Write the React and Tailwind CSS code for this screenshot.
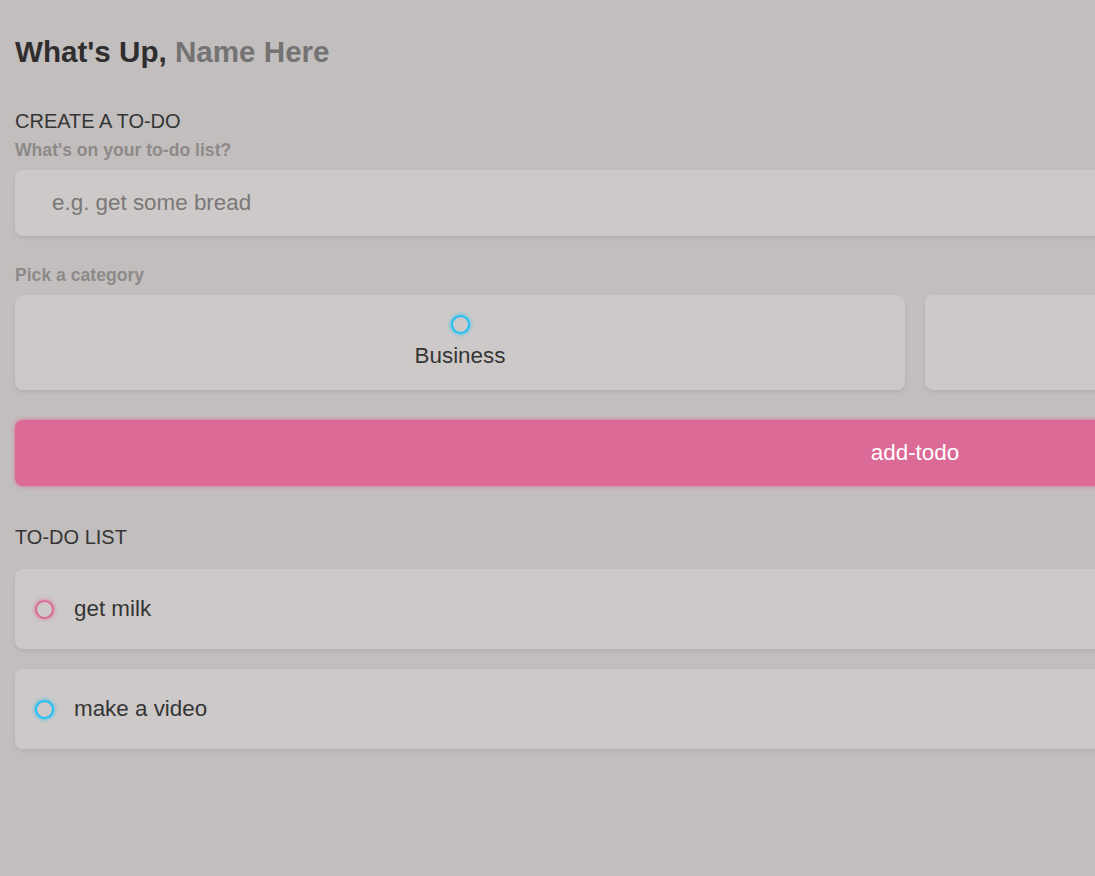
import { useState } from 'react';

const categories = [
    { id: 'business', label: 'Business', ring: 'border-[#1ec0f5] shadow-[0_0_4px_#1ec0f5]' },
    { id: 'personal', label: 'Personal', ring: 'border-[#dc6a96] shadow-[0_0_4px_#dc6a96]' },
];

const todos = [
    { id: 1, text: 'get milk', category: 'personal' },
    { id: 2, text: 'make a video', category: 'business' },
];

const Bubble = ({ category }) => {
    const cat = categories.find((c) => c.id === category) || categories[0];
    return <span className={`block h-[19px] w-[19px] shrink-0 rounded-full border-2 ${cat.ring}`} />;
};

const TodoItem = ({ todo }) => (
    <div className="flex h-[80px] items-center gap-5 rounded-lg bg-[#cdc9c8] px-5 shadow-[0_2px_4px_rgba(0,0,0,0.08)]">
        <Bubble category={todo.category} />
        <span className="text-[22.4px] leading-[26px] text-[#353535]">{todo.text}</span>
    </div>
);

export default function App() {
    const [value, setValue] = useState('');

    return (
        <div
            className="min-h-screen w-full overflow-hidden bg-[#c2bebd]"
            style={{ fontFamily: '"Liberation Sans", Arial, sans-serif' }}
        >
            <main className="w-[1830px] px-[15px] pt-[34px] pb-10">
                {/* Greeting */}
                <h2 className="text-[29.6px] font-bold leading-[36px] text-[#2f2d2d]">
                    What's Up, <span className="text-[#747373]">Name Here</span>
                </h2>

                {/* Create */}
                <section className="mt-[39px]">
                    <h3 className="text-[20px] leading-[24px] text-[#353535]">CREATE A TO-DO</h3>
                    <h4 className="mt-[7px] text-[17.6px] font-bold leading-[20px] text-[#8d8a89]">
                        What's on your to-do list?
                    </h4>
                    <input
                        type="text"
                        value={value}
                        onChange={(e) => setValue(e.target.value)}
                        placeholder="e.g. get some bread"
                        className="mt-[10px] block h-[66px] w-full rounded-lg bg-[#cdc9c8] pl-[37px] text-[22.4px] text-[#353535] shadow-[0_2px_4px_rgba(0,0,0,0.08)] outline-none placeholder:text-[#7b7878]"
                    />

                    <h4 className="mt-[29px] text-[17.6px] font-bold leading-[20px] text-[#8d8a89]">
                        Pick a category
                    </h4>
                    <div className="mt-[10px] grid grid-cols-2 gap-5">
                        {categories.map((cat) => (
                            <label
                                key={cat.id}
                                className="flex h-[95px] cursor-pointer flex-col items-center rounded-lg bg-[#cdc9c8] pt-[20px] shadow-[0_2px_4px_rgba(0,0,0,0.08)]"
                            >
                                <Bubble category={cat.id} />
                                <span className="mt-[9px] text-[22.4px] leading-[26px] text-[#353535]">{cat.label}</span>
                            </label>
                        ))}
                    </div>

                    <button className="mt-[30px] block h-[66px] w-full rounded-lg bg-[#db6a96] text-[22.4px] text-white shadow-[0_0_4px_#db6a96]">
                        add-todo
                    </button>
                </section>

                {/* List */}
                <section className="mt-[39px]">
                    <h3 className="text-[20px] leading-[24px] text-[#353535]">TO-DO LIST</h3>
                    <div className="mt-5 flex flex-col gap-5">
                        {todos.map((t) => (
                            <TodoItem key={t.id} todo={t} />
                        ))}
                    </div>
                </section>
            </main>
        </div>
    );
}
